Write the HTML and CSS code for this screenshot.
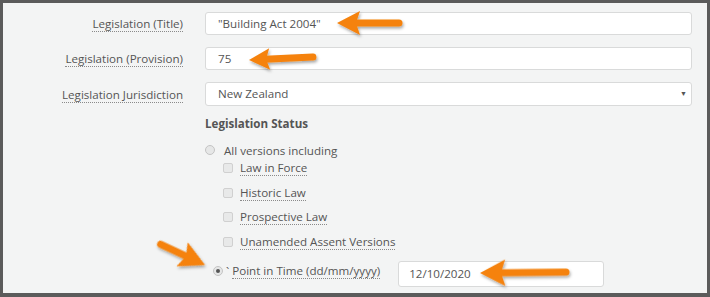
FILE: index.html
```html
<!DOCTYPE html>
<html lang="en">
<head>
    <meta charset="UTF-8">
    <meta name="viewport" content="width=device-width, initial-scale=1.0">
    <title>Legislation Search</title>
    <link rel="stylesheet" href="styles.css">
</head>
<body>

    <div class="frame">
        <div class="field">
            <div class="lbl"><span class="ul">Legislation (Title)</span></div>
            <div class="box">"Building Act 2004"</div>
        </div>
        <div class="field">
            <div class="lbl"><span class="ul">Legislation (Provision)</span></div>
            <div class="box">75</div>
        </div>
        <div class="field">
            <div class="lbl"><span class="ul">Legislation Jurisdiction</span></div>
            <div class="box select">New Zealand <span class="caret">&#9660;</span></div>
        </div>

        <div class="status">
            <div class="status-title">Legislation Status</div>
            <div class="opt"><span class="radio"></span>All versions including</div>
            <div class="subs">
                <div class="sub"><span class="check"></span><span class="ul">Law in Force</span></div>
                <div class="sub"><span class="check"></span><span class="ul">Historic Law</span></div>
                <div class="sub"><span class="check"></span><span class="ul">Prospective Law</span></div>
                <div class="sub"><span class="check"></span><span class="ul">Unamended Assent Versions</span></div>
            </div>
            <div class="pit">
                <span class="radio on"></span><span class="tick">`</span>
                <span class="ul">Point in Time (dd/mm/yyyy)</span>
                <div class="box date">12/10/2020</div>
            </div>
        </div>

        <!-- annotation arrows drawn over the form -->
        <svg class="arrows" width="710" height="297" viewBox="0 0 710 297">
            <defs>
                <filter id="sh" x="-20%" y="-40%" width="140%" height="180%">
                    <feDropShadow dx="1" dy="2" stdDeviation="1.5" flood-color="#000" flood-opacity="0.35"/>
                </filter>
                <g id="arr">
                    <path d="M0 0 L23 -12 L19 0 L23 12 Z"/>
                </g>
            </defs>
            <g fill="#f5820d" stroke="#f5820d" filter="url(#sh)">
                <g transform="translate(337 23)">
                    <use href="#arr" stroke="none"/>
                    <line x1="18" y1="0" x2="62" y2="0" stroke-width="7" stroke-linecap="round"/>
                </g>
                <g transform="translate(249 60) rotate(-2.6)">
                    <use href="#arr" stroke="none" transform="scale(0.9)"/>
                    <line x1="16" y1="0" x2="64" y2="0" stroke-width="7" stroke-linecap="round"/>
                </g>
                <g transform="translate(205 265) rotate(205)">
                    <use href="#arr" stroke="none" transform="scale(1.1)"/>
                    <line x1="18" y1="0" x2="49" y2="0" stroke-width="7" stroke-linecap="round"/>
                </g>
                <g transform="translate(480 273) rotate(-0.6)">
                    <use href="#arr" stroke="none" transform="scale(1.1)"/>
                    <line x1="18" y1="0" x2="86" y2="0" stroke-width="7" stroke-linecap="round"/>
                </g>
            </g>
        </svg>
    </div>

</body>
</html>
```

FILE: styles.css
```css
body { margin: 0; font-family: "Open Sans", "Noto Sans", sans-serif; font-size: 11.6px; color: #555; }
.frame { position: relative; box-sizing: border-box; width: 710px; height: 297px; background: #f3f4f4; border: 3px solid #5b5b5b; border-bottom-width: 4px; padding: 9px 15px 0 0; overflow: hidden; }
.field { display: grid; grid-template-columns: 180px 1fr; column-gap: 22px; align-items: center; margin-bottom: 12px; }
.lbl { text-align: right; }
.ul { border-bottom: 1px dotted #8a8a8a; line-height: 15px; }
.box { box-sizing: border-box; height: 23px; line-height: 21px; padding: 0 12px; background: #fff; border: 1px solid #d9dada; border-radius: 3px; }
.select { position: relative; height: 24px; line-height: 22px; }
.caret { position: absolute; right: 4px; top: 0; font-size: 7px; color: #555; }
.status { padding-left: 202px; margin-top: -3px; }
.status-title { font-weight: bold; line-height: 18px; margin-bottom: 8px; }
.opt { display: flex; align-items: center; height: 18px; }
.radio { box-sizing: border-box; width: 10px; height: 10px; border-radius: 50%; border: 1px solid #c4c4c4; background: #e6e7e7; margin-right: 9px; position: relative; }
.radio.on::after { content: ""; position: absolute; left: 2px; top: 2px; width: 4px; height: 4px; border-radius: 50%; background: #555; }
.subs { margin-top: -3px; }
.sub { display: flex; align-items: center; height: 24.6px; padding-left: 18px; }
.check { box-sizing: border-box; width: 10px; height: 10px; border: 1px solid #d0d0d0; background: #e8e9e9; border-radius: 2px; margin-right: 7px; }
.pit { display: flex; align-items: center; height: 26px; margin-top: 4px; padding-left: 8px; }
.pit .radio { margin-right: 3px; }
.tick { margin-right: 3px; }
.date { width: 206px; height: 26px; line-height: 24px; padding: 0 10px; margin-left: 18px; margin-top: 6px; }
.arrows { position: absolute; left: -3px; top: -3px; pointer-events: none; }
```
